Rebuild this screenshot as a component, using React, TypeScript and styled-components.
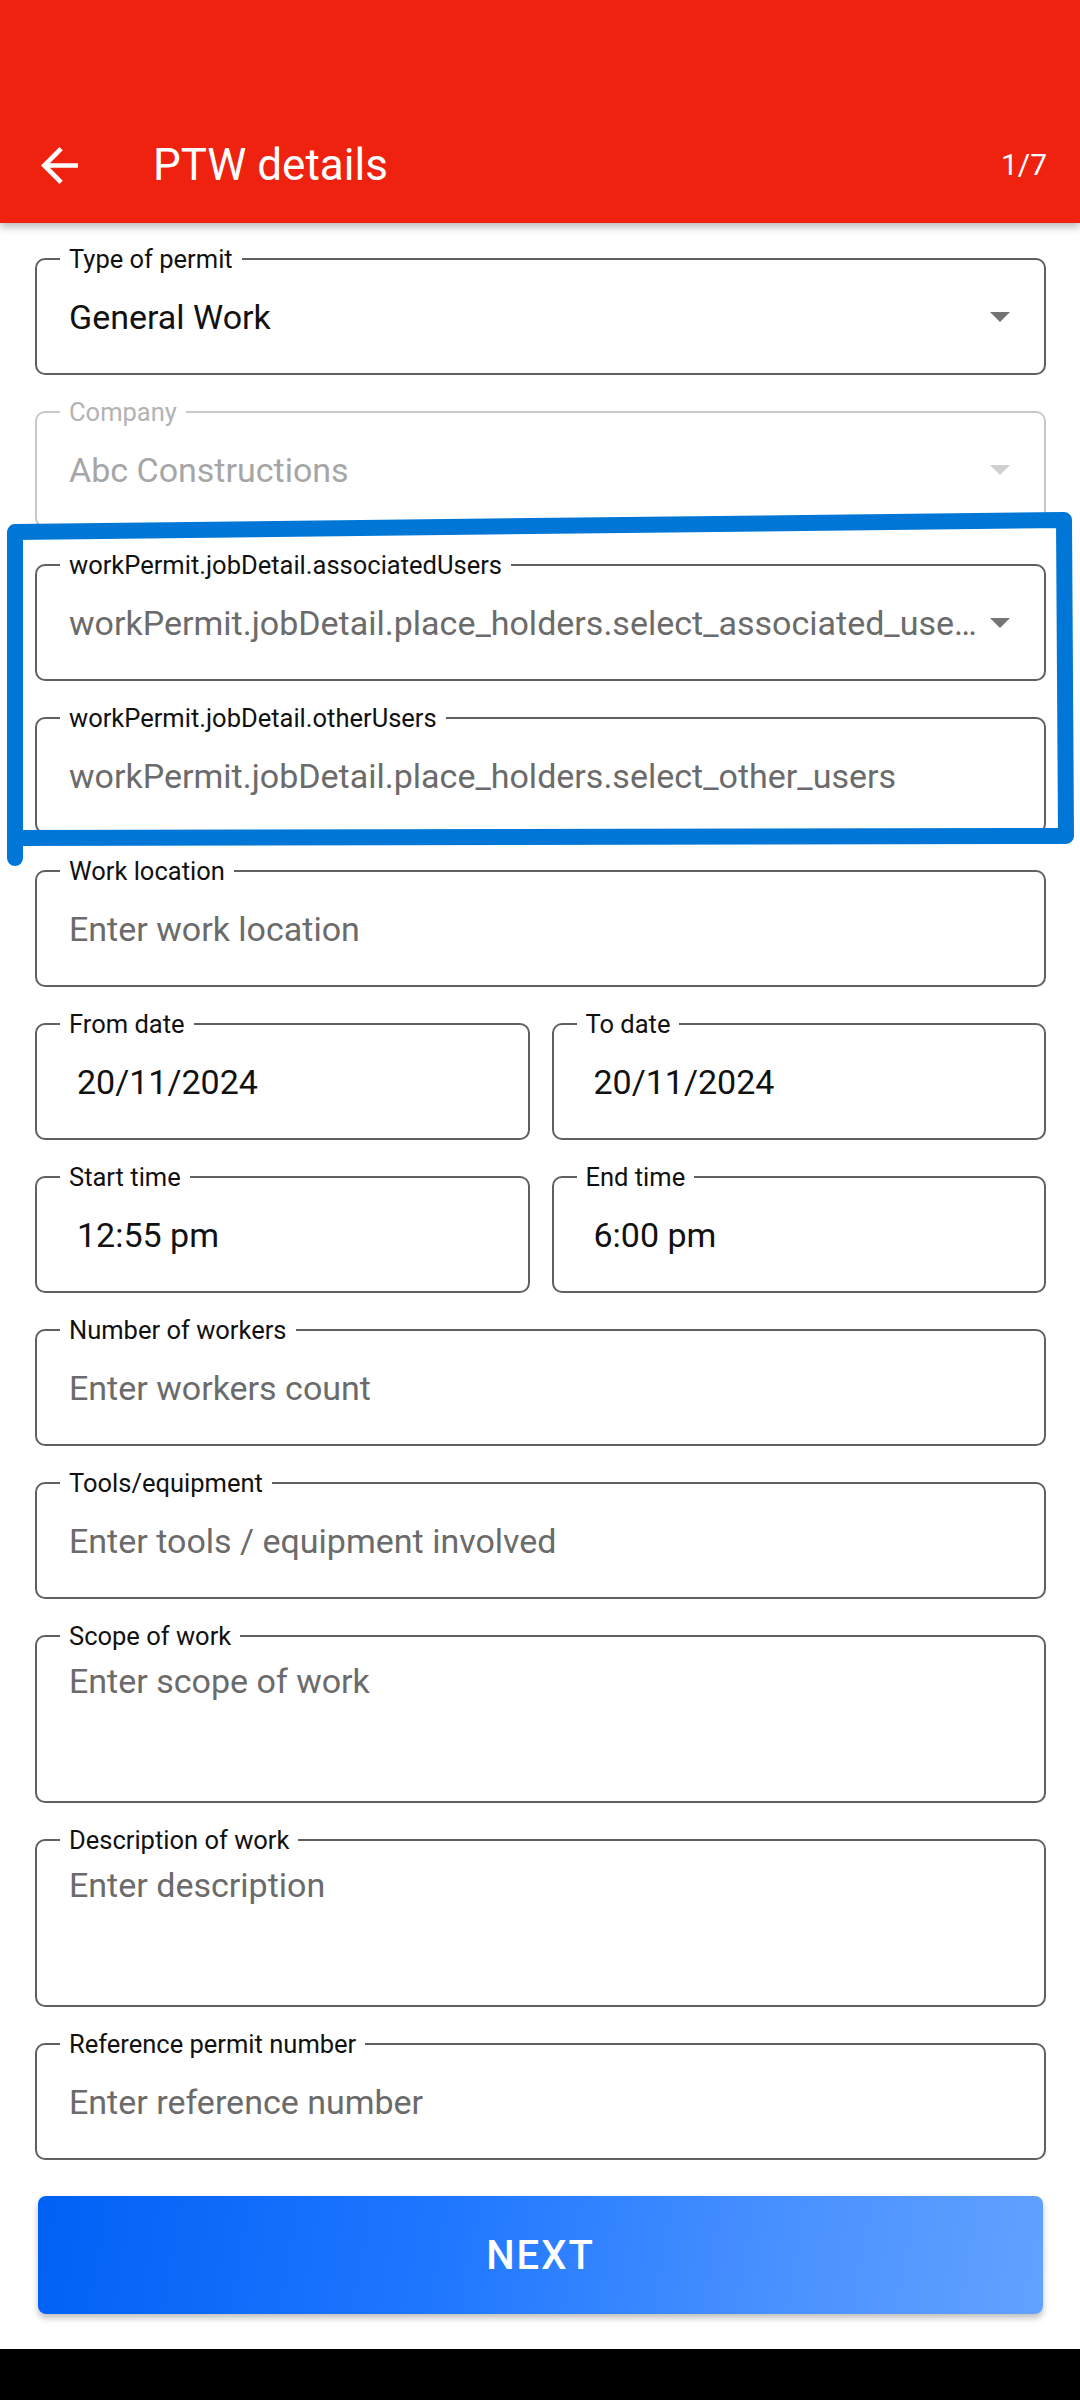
import React from 'react';
import styled, {createGlobalStyle} from 'styled-components';

const GlobalStyle = createGlobalStyle`
  html, body {
    margin: 0;
    padding: 0;
    background: #fff;
  }
  body {
    font-family: Roboto, "Noto Sans", sans-serif;
  }
  * {
    box-sizing: border-box;
  }
`;

const Page = styled.div`
  position: relative;
  min-height: 2400px;
  display: flex;
  flex-direction: column;
  background: #fff;
`;

const Header = styled.header`
  height: 223px;
  background: #ee220e;
  display: flex;
  align-items: flex-end;
  box-shadow: 0 4px 8px rgba(0, 0, 0, 0.28);
  position: relative;
  z-index: 1;
`;

const Toolbar = styled.div`
  height: 116px;
  width: 100%;
  display: flex;
  align-items: center;
  padding: 0 33px 0 41px;
  color: #fff;
`;

const BackButton = styled.button`
  border: 0;
  padding: 0;
  background: none;
  display: flex;
  width: 37px;
  height: 37px;
  color: #fff;
`;

const Title = styled.h1`
  margin: 0 0 0 75px;
  flex: 1;
  font-size: 44px;
  font-weight: 400;
  line-height: 1;
`;

const Step = styled.span`
  font-size: 30px;
  line-height: 1;
`;

const Form = styled.div`
  display: flex;
  flex-direction: column;
  gap: 22px;
  padding: 21px 34px 0 35px;
`;

const Pair = styled.div`
  display: grid;
  grid-template-columns: 1fr 1fr;
  gap: 22px;
`;

const Box = styled.fieldset<{$disabled?: boolean; $multiline?: boolean}>`
  margin: 0;
  min-width: 0;
  padding: 0 0 ${p => (p.$multiline ? 0 : 13)}px 23px;
  border: 2px solid ${p => (p.$disabled ? '#c8c8c8' : '#606060')};
  border-radius: 10px;
`;

const Legend = styled.legend<{$disabled?: boolean}>`
  padding: 0 9px;
  font-size: 25.5px;
  line-height: 30px;
  color: ${p => (p.$disabled ? '#b3b3b3' : '#111')};
`;

const Row = styled.div<{$inset?: boolean; $multiline?: boolean}>`
  display: flex;
  align-items: ${p => (p.$multiline ? 'flex-start' : 'center')};
  height: ${p => (p.$multiline ? 150 : 86)}px;
  padding: ${p => (p.$multiline ? '10px' : '0')} 34px 0 ${p => (p.$inset ? 17 : 9)}px;
  font-size: 34px;
`;

const Value = styled.span<{$tone: 'value' | 'placeholder' | 'disabled'}>`
  flex: 1;
  min-width: 0;
  white-space: nowrap;
  overflow: hidden;
  text-overflow: ellipsis;
  color: ${p =>
    p.$tone === 'value' ? '#111' : p.$tone === 'disabled' ? '#a6a6a6' : '#6b6b6b'};
  padding-right: 8px;
`;

const Caret = styled.svg<{$disabled?: boolean}>`
  flex: none;
  width: 20px;
  height: 10px;
  fill: ${p => (p.$disabled ? '#cfcfcf' : '#757575')};
`;

const NextButton = styled.button`
  margin: 14px 3px 0 3px;
  height: 118px;
  border: 0;
  border-radius: 8px;
  background: linear-gradient(100deg, #0061f5 0%, #1f77ff 40%, #4a92ff 75%, #62a2ff 100%);
  box-shadow: 0 4px 6px rgba(0, 0, 0, 0.25);
  color: #fff;
  font-family: Roboto, sans-serif;
  font-size: 40px;
  font-weight: 500;
  letter-spacing: 2px;
`;

const NavBar = styled.div`
  margin-top: auto;
  height: 51px;
  background: #000;
`;

const Annotation = styled.svg`
  position: absolute;
  top: 0;
  left: 0;
  width: 1080px;
  height: 900px;
  pointer-events: none;
  z-index: 2;
`;

type FieldProps = {
  label: string;
  value?: string;
  placeholder?: string;
  disabled?: boolean;
  select?: boolean;
  multiline?: boolean;
  inset?: boolean;
};

function Field({label, value, placeholder, disabled, select, multiline, inset}: FieldProps) {
  const tone = disabled ? 'disabled' : value ? 'value' : 'placeholder';
  return (
    <Box $disabled={disabled} $multiline={multiline}>
      <Legend $disabled={disabled}>{label}</Legend>
      <Row $inset={inset} $multiline={multiline}>
        <Value $tone={tone}>{value || placeholder}</Value>
        {select && (
          <Caret $disabled={disabled} viewBox="0 0 20 10">
            <polygon points="0,0 20,0 10,10" />
          </Caret>
        )}
      </Row>
    </Box>
  );
}

export default function App() {
  return (
    <Page>
      <GlobalStyle />
      <Header>
        <Toolbar>
          <BackButton aria-label="back">
            <svg viewBox="4 4 16 16" width="37" height="37" fill="#fff">
              <path d="M20 11H7.83l5.59-5.59L12 4l-8 8 8 8 1.41-1.41L7.83 13H20v-2z" />
            </svg>
          </BackButton>
          <Title>PTW details</Title>
          <Step>1/7</Step>
        </Toolbar>
      </Header>

      <Form>
        <Field label="Type of permit" value="General Work" select />
        <Field label="Company" value="Abc Constructions" select disabled />
        <Field
          label="workPermit.jobDetail.associatedUsers"
          placeholder="workPermit.jobDetail.place_holders.select_associated_users"
          select
        />
        <Field
          label="workPermit.jobDetail.otherUsers"
          placeholder="workPermit.jobDetail.place_holders.select_other_users"
        />
        <Field label="Work location" placeholder="Enter work location" />
        <Pair>
          <Field label="From date" value="20/11/2024" inset />
          <Field label="To date" value="20/11/2024" inset />
        </Pair>
        <Pair>
          <Field label="Start time" value="12:55 pm" inset />
          <Field label="End time" value="6:00 pm" inset />
        </Pair>
        <Field label="Number of workers" placeholder="Enter workers count" />
        <Field label="Tools/equipment" placeholder="Enter tools / equipment involved" />
        <Field label="Scope of work" placeholder="Enter scope of work" multiline />
        <Field label="Description of work" placeholder="Enter description" multiline />
        <Field label="Reference permit number" placeholder="Enter reference number" />
        <NextButton>NEXT</NextButton>
      </Form>

      <NavBar />

      {/* hand-drawn highlight over the two user fields */}
      <Annotation viewBox="0 0 1080 900">
        <path
          d="M15 858 L15 532 L1064 520 L1066 836 L15 838"
          fill="none"
          stroke="#0077d6"
          strokeWidth="16"
          strokeLinejoin="round"
          strokeLinecap="round"
        />
      </Annotation>
    </Page>
  );
}
